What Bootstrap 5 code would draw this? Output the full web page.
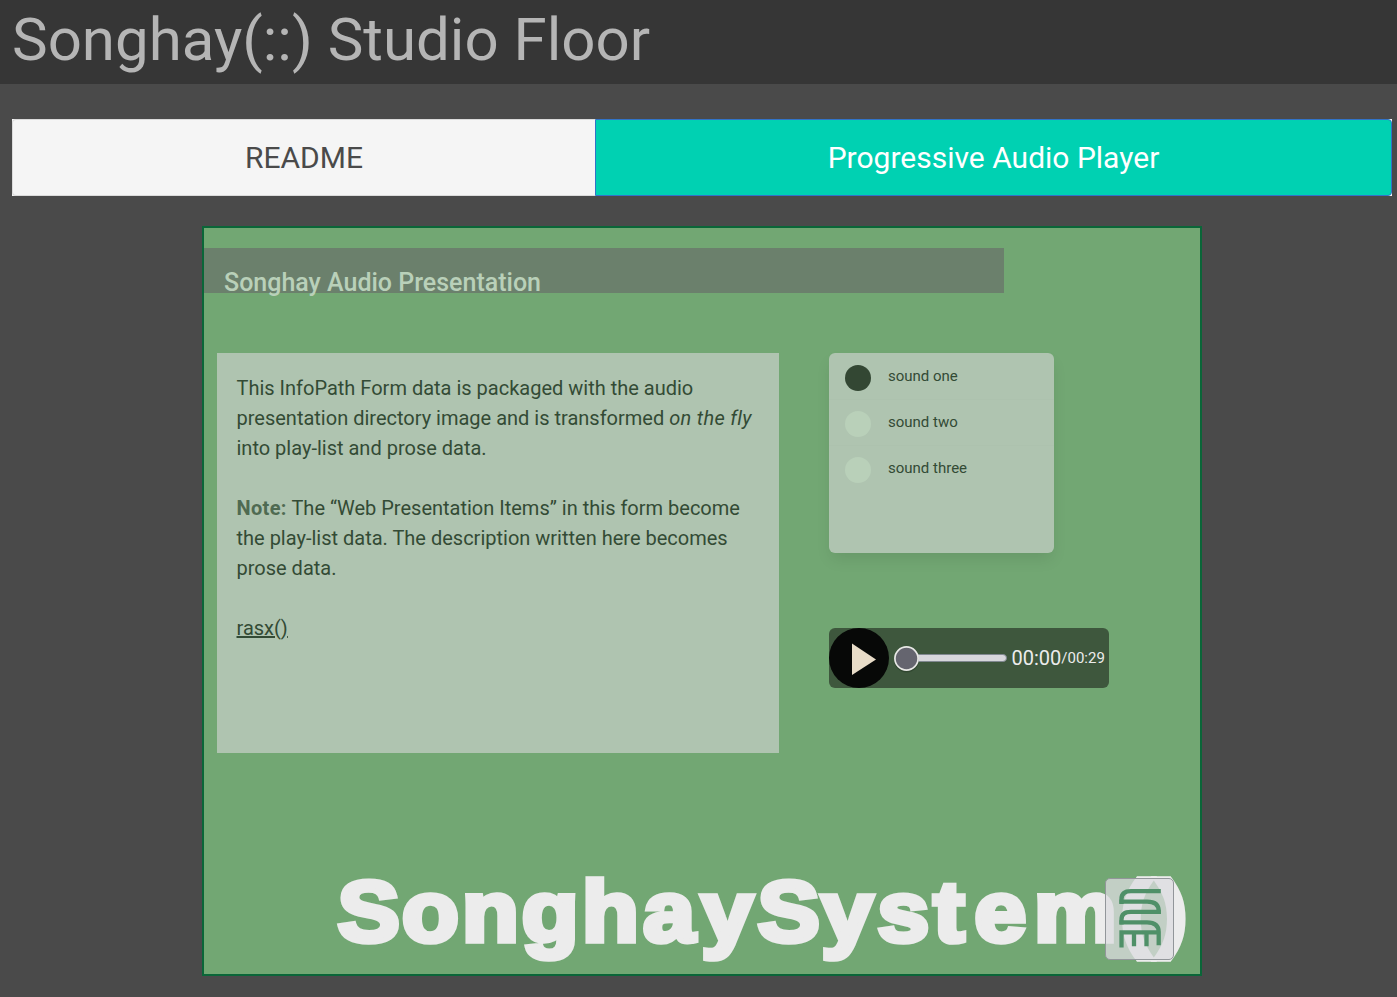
<!DOCTYPE html>
<html lang="en">
<head>
<meta charset="utf-8">
<meta name="viewport" content="width=device-width, initial-scale=1">
<title>Songhay(::) Studio Floor</title>
<link href="https://cdn.jsdelivr.net/npm/bootstrap@5.3.0/dist/css/bootstrap.min.css" rel="stylesheet">
<style>
body{background:#4a4a4a;font-family:Roboto,sans-serif;color:#334b35;height:997px;overflow:hidden}
.top-bar{height:84px;background:#363636;padding:0 12px}
.top-bar h1{font-size:60px;line-height:80px;font-weight:400;color:#b5b5b5;margin:0}
.floor{padding:35px 5px 0 12px}
.tabs{height:77px;background:#f5f5f5}
.tabs a{font-size:30px;text-decoration:none;border:1px solid #dbdbdb}
.tabs .tab-readme{width:583px;color:#4a4a4a;background:#f5f5f5;border-radius:4px 0 0 4px;border-right:0}
.tabs .tab-player{color:#fff;background:#00d1b2;border-color:#3273c8;border-radius:0 4px 4px 0}
.stage{width:1000px;height:750px;margin:30px auto 0;border:2px solid #0a6638;background:#72a773}
.banner{width:800px;height:45px;margin-top:20px;background:#6b806c;padding:16px 20px 0}
.banner h2{font-size:25px;line-height:38px;font-weight:500;color:#b9d0b9;margin:0}
.work{margin:60px 0 0 13px;gap:50px}
.prose{width:562px;height:400px;background:#afc4b0;padding:20px 19.5px;font-size:20px;line-height:30px}
.prose p{margin:0 0 30px}
.prose em{letter-spacing:.3px}
.prose strong{color:#4f6b52;letter-spacing:.35px}
.prose a{color:#334b35}
.playlist{width:225px;height:200px;background:#afc4b0;border-radius:6px;box-shadow:0 8px 16px -2px rgba(10,10,10,.09);font-size:15px;margin-bottom:75px;padding-top:1px}
.playlist li{height:46px;padding:2px 16px 0;gap:17px;border-bottom:1px solid #adc2ae}
.playlist li:last-child{border-color:transparent}
.playlist span{position:relative;top:-1.5px}
.dot{width:26px;height:26px;border-radius:50%;background:#b9d0b9}
.dot.on{background:#334733}
.player{width:280px;height:60px;border-radius:6px;background:#3e573d;color:#ececec}
.logo{right:8px;bottom:4px}
.logo text{font:bold 86px "Liberation Sans",sans-serif;fill:#ececec;stroke:#ececec;stroke-width:5.5px}
.seal{right:26px;bottom:14px;width:69px;height:82px;border:1px solid #92969a;border-radius:5px;background:rgba(219,219,224,.76)}
</style>
</head>
<body>
<header class="top-bar"><h1>Songhay(::) Studio Floor</h1></header>
<main class="floor">
  <nav class="tabs d-flex">
    <a href="#" class="tab-readme d-flex align-items-center justify-content-center">README</a>
    <a href="#" class="tab-player flex-grow-1 d-flex align-items-center justify-content-center">Progressive Audio Player</a>
  </nav>
  <section class="stage position-relative d-flex flex-column">
    <div class="banner"><h2>Songhay Audio Presentation</h2></div>
    <div class="work d-flex align-items-start">
      <article class="prose">
        <p>This InfoPath Form data is packaged with the audio<br>presentation directory image and is transformed <em>on the fly</em><br>into play-list and prose data.</p>
        <p><strong>Note:</strong> The “Web Presentation Items” in this form become<br>the play-list data. The description written here becomes<br>prose data.</p>
        <a href="#">rasx()</a>
      </article>
      <div>
        <ul class="playlist list-unstyled">
          <li class="d-flex align-items-center"><i class="dot on"></i><span>sound one</span></li>
          <li class="d-flex align-items-center"><i class="dot"></i><span>sound two</span></li>
          <li class="d-flex align-items-center"><i class="dot"></i><span>sound three</span></li>
        </ul>
        <div class="player">
          <svg width="280" height="60" viewBox="0 0 280 60" class="d-block">
            <circle cx="30" cy="30" r="30" fill="#070807"/>
            <path d="M23 15.500V47L47 31.500Z" fill="#e8dcc8"/>
            <rect x="71" y="26.500" width="106.500" height="7" rx="3.500" fill="#d7d7dc" stroke="#808890"/>
            <circle cx="77.500" cy="32" r="12.500" fill="#24382480"/>
            <circle cx="77.500" cy="30.500" r="11.600" fill="#65656f" stroke="#e8e8e6" stroke-width="1.700"/>
            <text x="182.500" y="36.800" font-size="20" fill="#ececec">00:00</text>
            <text x="232.300" y="34.800" font-size="15" fill="#ececec">/00:29</text>
          </svg>
        </div>
      </div>
    </div>
    <svg class="logo position-absolute overflow-visible" width="862" height="100" viewBox="330 870 862 100">
      <text transform="scale(1.08 1)" y="941.500" x="312.700 372.300 427.800 483 539 595.600 649.400 701.700 760.400 812.500 864.300 902.400 957.500 1037.500 1070.500">SonghaySystem()</text>
    </svg>
    <div class="seal position-absolute">
      <svg width="67" height="80" viewBox="0 0 67 80" class="d-block">
        <g fill="none" stroke="#4f9068" stroke-width="4.300">
          <path d="M54.800 12.200H25Q15.500 12.200 15.500 20V25"/>
          <path d="M13.400 22.700H41Q52.700 22.700 52.700 32V35"/>
          <path d="M54.800 32.900H25Q15.500 32.900 15.500 40.500V45.500"/>
          <path d="M13.400 43.300H41Q52.700 43.300 52.700 53V66.300"/>
          <path d="M52.700 53.400H15.500V68.500M28 53.400V67.300M40.500 53.400V67.300"/>
        </g>
      </svg>
    </div>
  </section>
</main>
<script src="https://cdn.jsdelivr.net/npm/bootstrap@5.3.0/dist/js/bootstrap.bundle.min.js"></script>
</body>
</html>
